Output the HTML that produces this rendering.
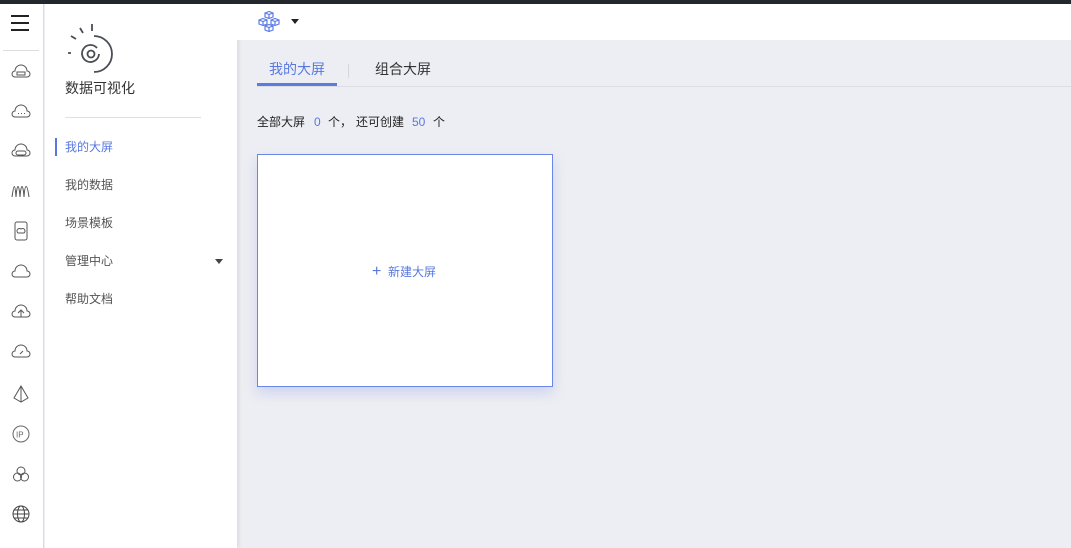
<!DOCTYPE html>
<html><head><meta charset="utf-8"><style>
*{margin:0;padding:0;box-sizing:border-box}
body{width:1071px;height:548px;overflow:hidden;background:#edeef3;font-family:"Liberation Sans","Noto Sans CJK SC",sans-serif;position:relative;font-size:12px;color:#333}
.top{position:absolute;left:0;top:0;width:1071px;height:4px;background:#25272e}
.ib{position:absolute;left:0;top:4px;width:44px;height:544px;background:#fff;border-right:1px solid #dcdde2}
.ib svg{position:absolute;left:11px}
.sb{position:absolute;left:45px;top:4px;width:192px;height:544px;background:#fff;box-shadow:2px 0 4px rgba(0,0,0,.08)}
.hd{position:absolute;left:237px;top:4px;width:834px;height:36px;background:#fff}
.m{position:absolute;font-size:12px;color:#555;left:20px}
.c{position:absolute;left:257px;top:113px;font-size:12px;color:#222;white-space:nowrap}
.c span{display:inline-block}
.b{color:#5878e0}
</style></head><body>
<div class="top"></div>
<div class="ib">
<div style="position:absolute;left:11px;top:11px;width:18px;height:2px;background:#222;box-shadow:0 7px 0 #222,0 14px 0 #222"></div>
<div style="position:absolute;left:3px;top:46px;width:36px;height:1px;background:#ddd"></div>
<svg width="20" height="16" style="top:60px" viewBox="0 0 20 16" fill="none" stroke="#555" stroke-width="1"><path d="M4 13h12a3 3 0 0 0 0-6 6 6 0 0 0-12 0 3 3 0 0 0 0 6z"/><rect x="6" y="8" width="8" height="3"/></svg>
<svg width="20" height="16" style="top:100px" viewBox="0 0 20 16" fill="none" stroke="#555"><path d="M4 13h12a3 3 0 0 0 0-6 6 6 0 0 0-12 0 3 3 0 0 0 0 6z"/><path d="M7 9.5h1M10 9.5h1M13 9.5h1"/></svg>
<svg width="20" height="16" style="top:139px" viewBox="0 0 20 16" fill="none" stroke="#555"><path d="M4 13h12a3 3 0 0 0 0-6 6 6 0 0 0-12 0 3 3 0 0 0 0 6z"/><rect x="5" y="8" width="10" height="4" rx="2"/></svg>
<svg width="20" height="16" style="top:179px" viewBox="0 0 20 16" fill="none" stroke="#555"><path d="M1 14c2-14 3-14 4 0 1-14 3-14 4 0 1-14 3-14 4 0 1-14 3-14 5 0"/></svg>
<svg width="20" height="20" style="top:217px" viewBox="0 0 20 20" fill="none" stroke="#555"><rect x="4" y="1" width="12" height="18" rx="2"/><path d="M7 12h6a2 2 0 0 0-3-4 2 2 0 0 0-3 4z"/></svg>
<svg width="20" height="16" style="top:259px" viewBox="0 0 20 16" fill="none" stroke="#555"><path d="M4 14h12a3 3 0 0 0 0-6 6 6 0 0 0-12 0 3 3 0 0 0 0 6z"/></svg>
<svg width="20" height="16" style="top:299px" viewBox="0 0 20 16" fill="none" stroke="#555"><path d="M4 14h12a3 3 0 0 0 0-6 6 6 0 0 0-12 0 3 3 0 0 0 0 6z"/><path d="M10 14V8M7 10l3-3 3 3"/></svg>
<svg width="20" height="16" style="top:339px" viewBox="0 0 20 16" fill="none" stroke="#555"><path d="M4 14h12a3 3 0 0 0 0-6 6 6 0 0 0-12 0 3 3 0 0 0 0 6z"/><path d="M9 11l3-3"/></svg>
<svg width="20" height="20" style="top:380px" viewBox="0 0 20 20" fill="none" stroke="#555"><path d="M10 2L3 14l7 4 7-4zM10 2v16"/></svg>
<svg width="20" height="20" style="top:420px" viewBox="0 0 20 20" fill="none" stroke="#666"><circle cx="10" cy="10" r="8"/><text x="5" y="13.5" font-size="8" fill="#666" stroke="none" font-family="Liberation Sans">IP</text></svg>
<svg width="20" height="20" style="top:460px" viewBox="0 0 20 20" fill="none" stroke="#555"><circle cx="10" cy="7" r="4"/><circle cx="6.5" cy="13" r="4"/><circle cx="13.5" cy="13" r="4"/></svg>
<svg width="20" height="20" style="top:500px" viewBox="0 0 20 20" fill="none" stroke="#444"><circle cx="10" cy="10" r="8"/><ellipse cx="10" cy="10" rx="3.5" ry="8"/><path d="M2 10h16M3 6h14M3 14h14"/></svg>
</div>
<div class="sb">
<svg width="50" height="56" style="position:absolute;left:20px;top:16px" viewBox="0 0 50 56" fill="none" stroke="#4a4d55" stroke-width="1.8"><circle cx="26" cy="34" r="3.5"/><path d="M32 28a8.5 8.5 0 1 0 2 6"/><path d="M29 16a18 18 0 0 1 0 36"/><path d="M27 4v7M15 8l3 5M6 16l5 3M3 33h3"/></svg>
<div style="position:absolute;left:20px;top:74px;font-size:14px;color:#333">数据可视化</div>
<div style="position:absolute;left:20px;top:113px;width:136px;height:1px;background:#e0e0e0"></div>
<div style="position:absolute;left:10px;top:134px;width:2px;height:18px;background:#5878e0"></div>
<div class="m" style="top:134px;color:#5878e0">我的大屏</div>
<div class="m" style="top:172px">我的数据</div>
<div class="m" style="top:210px">场景模板</div>
<div class="m" style="top:248px">管理中心</div>
<div style="position:absolute;left:170px;top:255px;border-left:4px solid transparent;border-right:4px solid transparent;border-top:5px solid #444"></div>
<div class="m" style="top:286px">帮助文档</div>
</div>
<div class="hd">
<svg width="24" height="22" style="position:absolute;left:20px;top:7px" viewBox="0 0 24 22" fill="none" stroke="#5b7be6" stroke-width="1.2"><path d="M8 2l4-1.5 4 1.5v4l-4 1.5-4-1.5zM8 2l4 1.5 4-1.5M12 3.5v4"/><path d="M2 9l4-1.5 4 1.5v4l-4 1.5-4-1.5zM2 9l4 1.5 4-1.5M6 10.5v4"/><path d="M14 9l4-1.5 4 1.5v4l-4 1.5-4-1.5zM14 9l4 1.5 4-1.5M18 10.5v4"/><path d="M8 15l4-1.5 4 1.5v4l-4 1.5-4-1.5zM8 15l4 1.5 4-1.5M12 16.5v4"/></svg>
<div style="position:absolute;left:54px;top:15px;border-left:4px solid transparent;border-right:4px solid transparent;border-top:5px solid #222"></div>
</div>
<div style="position:absolute;left:257px;top:86px;width:814px;height:1px;background:#dcdde3"></div>
<div style="position:absolute;left:269px;top:59px;font-size:14px;color:#5878e0">我的大屏</div>
<div style="position:absolute;left:257px;top:83px;width:80px;height:3px;background:#5b7be0"></div>
<div style="position:absolute;left:348px;top:64px;width:1px;height:14px;background:#d6d7dc"></div>
<div style="position:absolute;left:375px;top:59px;font-size:14px;color:#333">组合大屏</div>
<div class="c"><span style="width:57px">全部大屏</span><span class="b" style="width:14px">0</span><span style="width:28px">个，</span><span style="width:56px">还可创建</span><span class="b" style="width:21px">50</span><span>个</span></div>
<div style="position:absolute;left:257px;top:154px;width:296px;height:233px;background:#fff;border:1px solid #6a86e6;box-shadow:0 6px 12px rgba(90,120,225,.22)">
<div style="position:absolute;left:114px;top:108px;font-size:12px;color:#5878e0"><span style="font-size:16px;line-height:12px">+</span>&nbsp; 新建大屏</div>
</div>
</body></html>
